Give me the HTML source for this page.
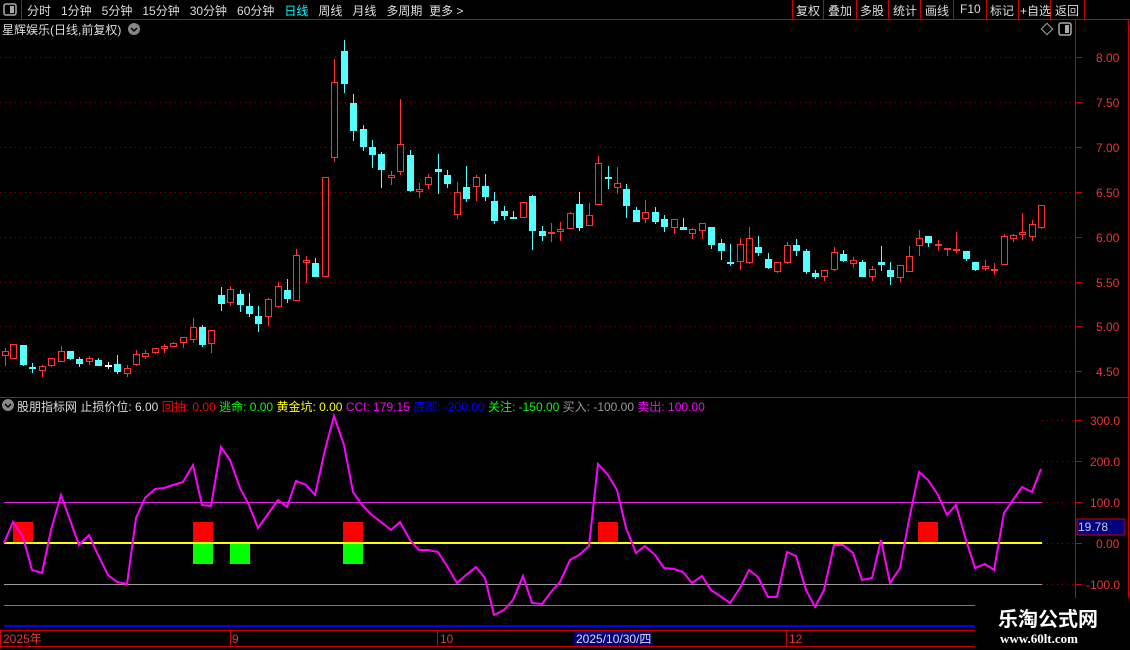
<!DOCTYPE html>
<html><head><meta charset="utf-8"><style>
body{margin:0;background:#000;width:1130px;height:650px;overflow:hidden;position:relative;font-family:"Liberation Sans","Noto Sans CJK SC",sans-serif;font-size:12px;color:#ccc}
.a{position:absolute;white-space:nowrap}
</style></head><body>
<svg id="s" width="1130" height="650" style="position:absolute;left:0;top:0" xmlns="http://www.w3.org/2000/svg">
<g stroke="#c00" stroke-width="1" fill="none" shape-rendering="crispEdges">
<line x1="0" y1="19.5" x2="1130" y2="19.5"/>
<line x1="21.5" y1="0" x2="21.5" y2="19"/>
<line x1="792.5" y1="0" x2="792.5" y2="19"/><line x1="823.5" y1="0" x2="823.5" y2="19"/><line x1="856.5" y1="0" x2="856.5" y2="19"/><line x1="888.5" y1="0" x2="888.5" y2="19"/><line x1="920.5" y1="0" x2="920.5" y2="19"/><line x1="953.5" y1="0" x2="953.5" y2="19"/><line x1="986.5" y1="0" x2="986.5" y2="19"/><line x1="1018.5" y1="0" x2="1018.5" y2="19"/><line x1="1050.5" y1="0" x2="1050.5" y2="19"/><line x1="1084.5" y1="0" x2="1084.5" y2="19"/>
<line x1="1075.5" y1="20" x2="1075.5" y2="598"/>
<line x1="1128.5" y1="20" x2="1128.5" y2="598"/>
<line x1="0" y1="397.5" x2="1130" y2="397.5"/>
<line x1="0" y1="630.5" x2="978" y2="630.5"/>
<line x1="0" y1="646.5" x2="978" y2="646.5"/>
<line x1="0.5" y1="630" x2="0.5" y2="646"/><line x1="230.5" y1="630" x2="230.5" y2="646"/><line x1="437.5" y1="630" x2="437.5" y2="646"/><line x1="786.5" y1="630" x2="786.5" y2="646"/>
</g>
<g stroke="#c00" shape-rendering="crispEdges">
<line x1="1076" y1="57.5" x2="1082" y2="57.5"/><line x1="1076" y1="102.5" x2="1082" y2="102.5"/><line x1="1076" y1="147.5" x2="1082" y2="147.5"/><line x1="1076" y1="192.5" x2="1082" y2="192.5"/><line x1="1076" y1="237.5" x2="1082" y2="237.5"/><line x1="1076" y1="282.5" x2="1082" y2="282.5"/><line x1="1076" y1="326.5" x2="1082" y2="326.5"/><line x1="1076" y1="371.5" x2="1082" y2="371.5"/>
<line x1="1076" y1="420.5" x2="1082" y2="420.5"/><line x1="1076" y1="461.5" x2="1082" y2="461.5"/><line x1="1076" y1="502.5" x2="1082" y2="502.5"/><line x1="1076" y1="543.5" x2="1082" y2="543.5"/><line x1="1076" y1="584.5" x2="1082" y2="584.5"/>
</g>
<g stroke="#900" stroke-dasharray="1,4" shape-rendering="crispEdges">
<line x1="0" y1="57.5" x2="1075" y2="57.5"/><line x1="0" y1="102.5" x2="1075" y2="102.5"/><line x1="0" y1="147.5" x2="1075" y2="147.5"/><line x1="0" y1="192.5" x2="1075" y2="192.5"/><line x1="0" y1="237.5" x2="1075" y2="237.5"/><line x1="0" y1="282.5" x2="1075" y2="282.5"/><line x1="0" y1="326.5" x2="1075" y2="326.5"/><line x1="0" y1="371.5" x2="1075" y2="371.5"/>
<line x1="1042" y1="420.5" x2="1075" y2="420.5"/><line x1="1042" y1="461.5" x2="1075" y2="461.5"/><line x1="1042" y1="502.5" x2="1075" y2="502.5"/><line x1="1042" y1="543.5" x2="1075" y2="543.5"/><line x1="1042" y1="584.5" x2="1075" y2="584.5"/>
</g>
<g id="c"></g>
<g shape-rendering="crispEdges">
<line x1="4" y1="502.5" x2="1042" y2="502.5" stroke="#e020e0"/>
<line x1="4" y1="584.5" x2="1042" y2="584.5" stroke="#999"/>
<line x1="4" y1="605.5" x2="978" y2="605.5" stroke="#0c0"/>
<line x1="4" y1="626" x2="978" y2="626" stroke="#00f" stroke-width="2"/>
<rect x="13" y="522" width="20" height="21" fill="#f00"/><rect x="193" y="522" width="20" height="21" fill="#f00"/><rect x="343" y="522" width="20" height="21" fill="#f00"/><rect x="598" y="522" width="20" height="21" fill="#f00"/><rect x="918" y="522" width="20" height="21" fill="#f00"/>
<rect x="193" y="544" width="20" height="20" fill="#0f0"/><rect x="230" y="544" width="20" height="20" fill="#0f0"/><rect x="343" y="544" width="20" height="20" fill="#0f0"/>
<line x1="4" y1="543" x2="1042" y2="543" stroke="#ff0" stroke-width="2"/>
<rect x="1077" y="519" width="48" height="16" fill="#000080" stroke="#c00"/>
<rect x="574" y="631" width="78" height="15" fill="#000080"/>
</g>
<polyline fill="none" stroke="#f0f" stroke-width="2" points="4,543 13,522 23,537 32,570 42,573 51,530 61,495 70,520 79,545 89,535 98,555 108,575 117,582 127,584 136,518 145,498 155,489 164,488 173,485 183,482 193,465 202,505 211,506 221,447 230,460 240,488 249,505 258,528 268,514 278,500 287,507 296,481 306,485 315,495 325,450 334,416 344,445 353,492 362,505 372,515 381,522 391,530 400,522 410,540 419,550 428,550 438,552 447,566 457,583 466,575 476,567 485,578 494,615 504,610 513,600 523,576 532,603 542,604 551,592 560,582 570,560 579,555 589,546 598,464 608,475 617,490 626,528 636,553 645,546 655,555 664,568 674,569 683,572 692,583 702,576 711,590 720,596 730,603 740,588 749,570 758,577 768,597 777,597 787,552 796,556 806,590 815,607 824,590 834,545 843,545 853,553 862,580 872,578 881,540 890,583 900,568 909,520 919,472 928,480 938,495 947,515 956,505 966,540 975,568 985,564 994,570 1004,513 1013,500 1022,487 1032,492 1041,469"/>
<g fill="#e33" font-size="12" font-family="Liberation Sans,sans-serif">
<text x="1096" y="62">8.00</text><text x="1096" y="107">7.50</text><text x="1096" y="152">7.00</text><text x="1096" y="197">6.50</text><text x="1096" y="242">6.00</text><text x="1096" y="287">5.50</text><text x="1096" y="331">5.00</text><text x="1096" y="376">4.50</text>
<text x="1090" y="425">300.0</text><text x="1090" y="466">200.0</text><text x="1090" y="507">100.0</text><text x="1096" y="548">0.00</text><text x="1086" y="589">-100.0</text>
<text x="3" y="643">2025年</text><text x="232" y="643">9</text><text x="440" y="643">10</text><text x="789" y="643">12</text>
</g>
<text x="1078" y="531" fill="#ccc" font-size="12" font-family="Liberation Sans,sans-serif">19.78</text>
<text x="576" y="643" fill="#ddd" font-size="12" font-family="Liberation Sans,Noto Sans CJK SC,sans-serif">2025/10/30/四</text>
<rect x="1043" y="25" width="8" height="8" fill="none" stroke="#aaa" transform="rotate(45 1047 29)"/>
<rect x="1059" y="23" width="12" height="12" rx="2" fill="none" stroke="#aaa" stroke-width="1.5"/><rect x="1065" y="25" width="4" height="8" fill="#aaa"/>
<rect x="4" y="4" width="12" height="11" rx="2" fill="none" stroke="#aaa" stroke-width="1.5"/><rect x="10" y="6" width="4" height="7" fill="#aaa"/>
<circle cx="134" cy="29" r="6" fill="#888"/><path d="M131 28l3 3 3-3" stroke="#000" fill="none" stroke-width="1.5"/>
<circle cx="8" cy="405" r="6" fill="#888"/><path d="M5 404l3 3 3-3" stroke="#000" fill="none" stroke-width="1.5"/>
<rect x="975" y="598" width="155" height="52" fill="#000"/>
</svg>
<div class="a" style="left:27px;top:2px;color:#ddd">分时&nbsp;&nbsp;&nbsp;1分钟&nbsp;&nbsp;&nbsp;5分钟&nbsp;&nbsp;&nbsp;15分钟&nbsp;&nbsp;&nbsp;30分钟&nbsp;&nbsp;&nbsp;60分钟&nbsp;&nbsp;&nbsp;<span style="color:#0ff">日线</span>&nbsp;&nbsp;&nbsp;周线&nbsp;&nbsp;&nbsp;月线&nbsp;&nbsp;&nbsp;多周期&nbsp;&nbsp;更多 &gt;</div>
<div class="a" style="left:796px;top:2px;color:#ddd">复权</div><div class="a" style="left:828px;top:2px;color:#ddd">叠加</div><div class="a" style="left:860px;top:2px;color:#ddd">多股</div><div class="a" style="left:893px;top:2px;color:#ddd">统计</div><div class="a" style="left:925px;top:2px;color:#ddd">画线</div><div class="a" style="left:960px;top:2px;color:#ddd">F10</div><div class="a" style="left:990px;top:2px;color:#ddd">标记</div><div class="a" style="left:1020px;top:2px;color:#ddd">+自选</div><div class="a" style="left:1055px;top:2px;color:#ddd">返回</div>
<div class="a" style="left:2px;top:21px;color:#ddd">星辉娱乐(日线,前复权)</div>
<div class="a" style="left:17px;top:398px;color:#ddd">股朋指标网 止损价位: 6.00 <span style="color:#f00">回抽: 0.00</span> <span style="color:#0f0">逃命: 0.00</span> <span style="color:#ff0">黄金坑: 0.00</span> <span style="color:#f0f">CCI: 179.15</span> <span style="color:#00f">底部: -200.00</span> <span style="color:#0f0">关注: -150.00</span> <span style="color:#999">买入: -100.00</span> <span style="color:#f0f">卖出: 100.00</span></div>
<div class="a" style="left:998px;top:606px;color:#fff;font-size:20px;font-weight:bold;font-family:'Noto Sans CJK SC',sans-serif;line-height:24px">乐淘公式网</div>
<div class="a" style="left:1000px;top:631px;color:#fff;font-size:13px;font-weight:bold;font-family:'Liberation Serif',serif">www.60lt.com</div>
<script>
var d=[[4.5,351,356,348,366,'r'],[13,344,359,344,359,'r'],[23,345,365,345,366,'c'],[32,367,367,363,373,'c'],[42,366,371,365,377,'r'],[51,358,366,358,367,'r'],[61,351,362,346,362,'r'],[70,351,359,351,360,'c'],[79,359,364,357,367,'c'],[89,358,362,356,365,'r'],[98,360,366,358,366,'c'],[108,365,365,362,369,'w'],[117,364,372,355,374,'c'],[127,368,374,365,377,'r'],[136,354,365,350,366,'r'],[145,353,357,350,359,'r'],[155,348,353,348,354,'r'],[164,346,349,344,353,'r'],[173,343,347,342,347,'r'],[183,337,343,337,348,'r'],[193,327,340,318,343,'r'],[202,327,345,325,347,'c'],[211,330,344,330,353,'r'],[221,295,304,287,311,'c'],[230,289,303,286,306,'r'],[240,294,305,290,312,'c'],[249,306,314,293,317,'c'],[258,316,324,306,332,'c'],[268,299,317,298,326,'r'],[278,286,307,282,308,'r'],[287,290,299,279,303,'c'],[296,255,301,249,301,'r'],[306,260,263,256,283,'r'],[315,263,277,258,277,'c'],[325,177,277,177,277,'r'],[334,82,158,59,162,'r'],[344,51,84,40,93,'c'],[353,103,131,94,141,'c'],[363,129,147,125,151,'c'],[372,147,155,140,168,'c'],[381,154,170,152,188,'c'],[391,175,178,171,185,'r'],[400,144,172,99,175,'r'],[410,155,191,150,192,'c'],[419,189,192,183,198,'r'],[428,177,185,174,189,'r'],[438,169,172,154,194,'c'],[447,175,184,170,188,'c'],[457,192,215,182,219,'r'],[466,187,199,166,202,'c'],[476,177,187,175,201,'r'],[485,186,197,174,201,'c'],[494,201,221,192,224,'c'],[504,211,216,206,220,'c'],[513,217,217,211,219,'c'],[523,202,218,202,218,'r'],[532,196,231,195,250,'c'],[542,231,236,226,241,'c'],[551,232,232,223,242,'r'],[560,229,232,222,241,'r'],[570,213,229,212,229,'r'],[579,204,228,192,231,'c'],[589,215,226,203,226,'r'],[598,163,205,156,205,'r'],[608,177,177,166,189,'c'],[617,183,188,167,194,'r'],[626,189,206,184,218,'c'],[636,210,222,207,222,'c'],[645,212,219,200,223,'r'],[655,212,222,207,224,'c'],[664,219,227,215,232,'c'],[674,219,228,219,234,'r'],[683,227,230,218,230,'c'],[692,229,234,228,239,'r'],[702,223,231,223,239,'r'],[711,227,245,227,249,'c'],[721,243,251,239,260,'c'],[730,262,262,244,266,'c'],[740,244,262,238,270,'r'],[749,238,263,227,264,'r'],[758,247,253,236,256,'c'],[768,259,268,253,269,'c'],[777,262,272,262,273,'r'],[787,245,263,242,264,'r'],[796,245,251,239,256,'c'],[806,251,272,249,274,'c'],[815,273,277,270,279,'c'],[824,270,277,270,281,'r'],[834,252,270,247,271,'r'],[843,254,261,250,262,'c'],[853,260,264,257,268,'r'],[862,262,277,260,277,'c'],[872,269,277,266,281,'r'],[881,262,265,246,271,'c'],[890,270,277,262,285,'c'],[900,265,278,265,282,'r'],[909,256,272,246,272,'r'],[919,238,246,230,256,'r'],[928,236,243,236,247,'c'],[938,244,246,240,251,'r'],[947,248,248,248,256,'r'],[956,249,249,232,253,'r'],[966,251,259,251,261,'c'],[975,262,270,262,271,'c'],[985,266,269,260,271,'r'],[994,269,269,263,275,'r'],[1004,236,265,234,265,'r'],[1013,235,239,234,242,'r'],[1022,232,235,213,240,'r'],[1032,224,237,220,241,'r'],[1041,205,228,205,229,'r']];
var h='';d.forEach(function(k){var x=Math.round(k[0]),col=k[5]=='r'?'#ff3232':(k[5]=='w'?'#fff':'#54ffff');
h+='<line x1="'+(x+.5)+'" y1="'+k[3]+'" x2="'+(x+.5)+'" y2="'+k[4]+'" stroke="'+col+'"/>';
var hgt=k[2]-k[1];if(hgt<2){h+='<rect x="'+(x-3)+'" y="'+k[1]+'" width="7" height="2" fill="'+col+'"/>';}
else if(k[5]=='r'){h+='<rect x="'+(x-2.5)+'" y="'+(k[1]+.5)+'" width="6" height="'+(hgt-1)+'" fill="#000" stroke="'+col+'"/>';}
else{h+='<rect x="'+(x-3)+'" y="'+k[1]+'" width="7" height="'+hgt+'" fill="'+col+'"/>';}});
document.getElementById('c').innerHTML=h;
</script>
</body></html>
